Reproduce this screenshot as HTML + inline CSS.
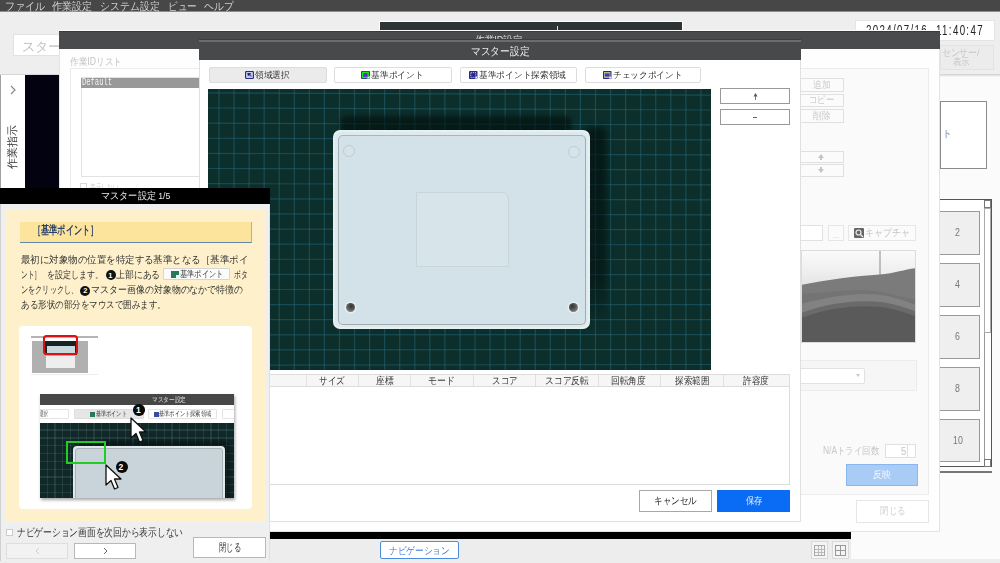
<!DOCTYPE html>
<html><head><meta charset="utf-8">
<style>
html,body{margin:0;padding:0;width:1000px;height:563px;overflow:hidden;background:#fcfbfb;font-family:"Liberation Sans",sans-serif;}
.a{position:absolute;box-sizing:border-box;}
.t{position:absolute;white-space:nowrap;line-height:1;transform-origin:0 50%;}
</style></head><body>
<div class="a" style="left:0px;top:0px;width:1000px;height:11px;background:#474747;"></div>
<div class="a" style="left:0px;top:11px;width:1000px;height:1px;background:#8c8c8c;"></div>
<div class="t" style="left:4.8px;top:0.95px;font-size:10.5px;color:#d2d2d2;--w:40.2;">ファイル</div>
<div class="t" style="left:51.6px;top:0.95px;font-size:10.5px;color:#d2d2d2;--w:40.2;">作業設定</div>
<div class="t" style="left:100.2px;top:0.95px;font-size:10.5px;color:#d2d2d2;--w:59.4;">システム設定</div>
<div class="t" style="left:168px;top:0.95px;font-size:10.5px;color:#d2d2d2;--w:28.8;">ビュー</div>
<div class="t" style="left:204px;top:0.95px;font-size:10.5px;color:#d2d2d2;--w:29.4;">ヘルプ</div>
<div class="a" style="left:0px;top:12px;width:1000px;height:62px;background:#eeeeee;"></div>
<div class="a" style="left:0px;top:74px;width:1000px;height:3px;background:linear-gradient(180deg,#cfcfcf,#e8e8e8 60%,rgba(250,250,250,0));"></div>
<div class="a" style="left:13px;top:34px;width:140px;height:22px;background:#fff;border:1px solid #e2e2e2;"></div>
<div class="t" style="left:22px;top:39.5px;font-size:13px;color:#c2c2c2;--w:53;">スタート</div>
<div class="a" style="left:855px;top:20px;width:140px;height:21px;background:#fff;border:1px solid #e4e4e4;"></div>
<div class="t" style="left:865.6px;top:23.35px;font-size:14.5px;color:#222;letter-spacing:2px;--w:117.9;">2024/07/16&nbsp;&nbsp;11:40:47</div>
<div class="a" style="left:940px;top:45px;width:54px;height:25px;background:#ececec;border:1px solid #e2e2e2;"></div>
<div class="t" style="left:942.4px;top:48.15px;font-size:9.5px;color:#c6c6c6;--w:37.6;">センサー/</div>
<div class="t" style="left:952.8px;top:57.25px;font-size:9.5px;color:#c6c6c6;--w:16.8;">表示</div>
<div class="a" style="left:0px;top:75px;width:25px;height:464px;background:#fff;border-left:1px solid #a0a0a0;"></div>
<svg class="a" style="left:9px;top:85px;" width="8" height="10"><path d="M2 1 L6 5 L2 9" stroke="#8a8a8a" stroke-width="1.2" fill="none"/></svg>
<div class="a" style="left:7px;top:168.5px;width:44px;height:11px;transform:rotate(-90deg);transform-origin:0 0;"><div class="t" style="left:0;top:0;font-size:10.5px;color:#333;--w:43.5;">作業指示</div></div>
<div class="a" style="left:25px;top:75px;width:826px;height:464px;background:#030210;"></div>
<div class="a" style="left:270px;top:532px;width:581px;height:7px;background:#000;"></div>
<div class="a" style="left:0px;top:539px;width:851px;height:24px;background:#ededed;"></div>
<div class="a" style="left:851px;top:559px;width:149px;height:4px;background:#ededed;"></div>
<div class="a" style="left:380px;top:541px;width:79px;height:18px;background:#fff;border:1px solid #4a8ae0;border-radius:2px;"></div>
<div class="t" style="left:389px;top:545.75px;font-size:9.5px;color:#3d7bd0;--w:60.6;">ナビゲーション</div>
<div class="a" style="left:811px;top:541px;width:17px;height:18px;background:#f4f4f4;border:1px solid #dadada;"></div>
<div class="a" style="left:832px;top:541px;width:17px;height:18px;background:#f4f4f4;border:1px solid #dadada;"></div>
<div class="a" style="left:814px;top:545px;width:11px;height:11px;border:1px solid #aaa;background:linear-gradient(90deg,transparent 3px,#bbb 3px,#bbb 4px,transparent 4px,transparent 6px,#bbb 6px,#bbb 7px,transparent 7px),linear-gradient(180deg,transparent 3px,#bbb 3px,#bbb 4px,transparent 4px,transparent 6px,#bbb 6px,#bbb 7px,transparent 7px);"></div>
<div class="a" style="left:835px;top:545px;width:11px;height:11px;border:1px solid #999;background:linear-gradient(90deg,transparent 4px,#999 4px,#999 5px,transparent 5px),linear-gradient(180deg,transparent 4px,#999 4px,#999 5px,transparent 5px);"></div>
<div class="a" style="left:940px;top:101px;width:47px;height:68px;border:1px solid #8a8a8a;background:#fff;"></div>
<div class="t" style="left:942px;top:129px;font-size:10px;color:#999;">ト</div>
<div class="a" style="left:940px;top:199px;width:52px;height:268px;border:1px solid #555;border-left:none;background:#fff;"></div>
<div class="a" style="left:984px;top:200px;width:7px;height:266px;border-left:1px solid #999;background:#fff;"></div>
<div class="a" style="left:984px;top:200px;width:7px;height:8px;border:1px solid #777;background:#fff;"></div>
<div class="a" style="left:984px;top:208px;width:7px;height:125px;border:1px solid #aaa;background:#fff;"></div>
<div class="a" style="left:984px;top:459px;width:7px;height:8px;border:1px solid #777;background:#fff;"></div>
<div class="a" style="left:940px;top:210.5px;width:39.5px;height:44px;background:#efefef;border:1.5px solid #999;border-left:none;"></div>
<div class="t" style="left:955px;top:227px;font-size:11px;color:#777;transform:scaleX(0.8);">2</div>
<div class="a" style="left:940px;top:262.5px;width:39.5px;height:44.25px;background:#efefef;border:1.5px solid #999;border-left:none;"></div>
<div class="t" style="left:955px;top:279.125px;font-size:11px;color:#777;transform:scaleX(0.8);">4</div>
<div class="a" style="left:940px;top:315px;width:39.5px;height:43.5px;background:#efefef;border:1.5px solid #999;border-left:none;"></div>
<div class="t" style="left:955px;top:331.25px;font-size:11px;color:#777;transform:scaleX(0.8);">6</div>
<div class="a" style="left:940px;top:366.75px;width:39.5px;height:43.75px;background:#efefef;border:1.5px solid #999;border-left:none;"></div>
<div class="t" style="left:955px;top:383.125px;font-size:11px;color:#777;transform:scaleX(0.8);">8</div>
<div class="a" style="left:940px;top:419px;width:39.5px;height:43px;background:#efefef;border:1.5px solid #999;border-left:none;"></div>
<div class="t" style="left:953px;top:435px;font-size:11px;color:#777;transform:scaleX(0.8);">10</div>
<div class="a" style="left:940px;top:471px;width:52px;height:2px;background:#777;"></div>
<div class="a" style="left:379px;top:21px;width:304px;height:10px;background:#fff;"></div>
<div class="a" style="left:380px;top:22px;width:302px;height:8px;background:#2e3333;"></div>
<div class="a" style="left:557px;top:26px;width:1px;height:4px;background:#ddd;"></div>
<div class="a" style="left:59px;top:30px;width:881px;height:502px;background:#fefefe;border:1px solid #e4e4e4;"></div>
<div class="a" style="left:59px;top:29.5px;width:881px;height:1.5px;background:#fafafa;"></div>
<div class="a" style="left:59px;top:31px;width:881px;height:18px;background:#4a4b4d;border-top:1px solid #3a3a3a;"></div>
<div class="t" style="left:474.8px;top:34.75px;font-size:10.5px;color:#dddddd;--w:48;">作業ID設定</div>
<div class="t" style="left:70px;top:56.5px;font-size:10px;color:#c4c4c4;--w:52;">作業IDリスト</div>
<div class="a" style="left:70px;top:68px;width:200px;height:130px;border:1px solid #ececec;background:#fff;"></div>
<div class="a" style="left:80.5px;top:77px;width:150px;height:100px;border:1px solid #e2e2e2;background:#fff;"></div>
<div class="a" style="left:81px;top:78px;width:150px;height:9.5px;background:#999;"></div>
<div class="a" style="left:80px;top:183px;width:7px;height:7px;border:1px solid #d8d8d8;background:#fff;"></div>
<div class="t" style="left:89.5px;top:182.5px;font-size:10px;color:#d0d0d0;--w:28.5;">表示しない</div>
<div class="t" style="left:82px;top:77.8px;font-size:10px;color:#f4f4f4;font-family:'Liberation Mono',monospace;--w:30;">Default</div>
<div class="a" style="left:790px;top:68px;width:138.5px;height:426.5px;background:#fafafa;border:1px solid #ececec;"></div>
<div class="a" style="left:790px;top:78px;width:53.5px;height:13.5px;background:#fbfbfb;border:1px solid #e0e0e0;"></div>
<div class="t" style="left:812.7px;top:79.75px;font-size:10px;color:#c8c8c8;--w:17.1;">追加</div>
<div class="a" style="left:790px;top:93.5px;width:53.5px;height:13px;background:#fbfbfb;border:1px solid #e0e0e0;"></div>
<div class="t" style="left:809.2px;top:95px;font-size:10px;color:#c8c8c8;--w:25.1;">コピー</div>
<div class="a" style="left:790px;top:109px;width:53.5px;height:13.5px;background:#fbfbfb;border:1px solid #e0e0e0;"></div>
<div class="t" style="left:812.7px;top:110.75px;font-size:10px;color:#c8c8c8;--w:17.3;">削除</div>
<div class="a" style="left:790px;top:151px;width:53.5px;height:11.5px;background:#fbfbfb;border:1px solid #e0e0e0;"></div>
<svg class="a" style="left:818px;top:153.75px;" width="6" height="6"><path d="M0 4 L3 0 L6 4 Z M2 4 H4 V6 H2Z" fill="#c4c4c4"/></svg>
<div class="a" style="left:790px;top:164px;width:53.5px;height:12.5px;background:#fbfbfb;border:1px solid #e0e0e0;"></div>
<svg class="a" style="left:818px;top:167.25px;" width="6" height="6"><path d="M0 2 L3 6 L6 2 Z M2 0 H4 V2 H2Z" fill="#c4c4c4"/></svg>
<div class="a" style="left:790px;top:225px;width:32.5px;height:16px;background:#fff;border:1px solid #e2e2e2;"></div>
<div class="a" style="left:828px;top:225px;width:16px;height:16px;background:#fbfbfb;border:1px solid #e6e6e6;"></div>
<div class="t" style="left:833px;top:232px;font-size:8px;color:#ccc;">...</div>
<div class="a" style="left:848px;top:225px;width:68px;height:16px;background:#fbfbfb;border:1px solid #e6e6e6;"></div>
<div class="a" style="left:854px;top:228px;width:9.5px;height:10px;background:#666;border-radius:1px;"></div>
<svg class="a" style="left:854px;top:228px;" width="10" height="10"><circle cx="4.5" cy="4.5" r="2.5" stroke="#eee" stroke-width="1.2" fill="none"/><path d="M6.5 6.5 L9 9" stroke="#eee" stroke-width="1.3"/></svg>
<div class="t" style="left:865px;top:228px;font-size:10px;color:#c4c4c4;--w:45;">キャプチャ</div>
<div class="a" style="left:801px;top:249.5px;width:115px;height:93.5px;overflow:hidden;background:linear-gradient(180deg,#fafafa 0%,#f0f0f0 20%,#e6e6e6 35%);border:1px solid #dcdcdc;">
<svg width="115" height="93" style="position:absolute;left:-1px;top:-1px">
<path d="M0 35 C25 30 55 26 78.5 24.5 C95 23 105 19 116 18 L116 94 L0 94 Z" fill="#7b7b7b"/>
<path d="M0 44 C30 42 60 38 80 42 C95 45 105 48 116 50 L116 94 L0 94 Z" fill="#747474"/>
<path d="M0 54 C30 46 58 42 80 45 C95 47 105 52 116 55 L116 94 L0 94 Z" fill="#828282"/>
<path d="M0 63 C30 52 58 50 80 52 C95 54 105 58 116 62 L116 94 L0 94 Z" fill="#6a6a6a"/>
<path d="M0 68 C30 57 58 55 80 57 C95 59 105 63 116 67 L116 94 L0 94 Z" fill="#5a5a5a"/>
<path d="M79 1 V25" stroke="#8a8a8a" stroke-width="1"/>
</svg></div>
<div class="a" style="left:790px;top:360px;width:127px;height:31px;background:#f6f6f6;border:1px solid #ececec;"></div>
<div class="a" style="left:790px;top:367.5px;width:74.5px;height:16.5px;background:#fff;border:1px solid #e2e2e2;border-radius:2px;"></div>
<svg class="a" style="left:856px;top:374px;" width="5" height="4"><path d="M0 0 L4 0 L2 3Z" fill="#c8c8c8"/></svg>
<div class="t" style="left:823px;top:446px;font-size:10px;color:#c8c8c8;--w:56.4;">N/Aトライ回数</div>
<div class="a" style="left:884.7px;top:443.6px;width:31px;height:14.7px;background:#fff;border:1px solid #e0e0e0;"></div>
<div class="a" style="left:907px;top:443.6px;width:8.8px;height:14.7px;border-left:1px solid #e0e0e0;"></div>
<div class="t" style="left:901px;top:445.5px;font-size:11px;color:#c4c4c4;transform:scaleX(0.85);">5</div>
<div class="a" style="left:846px;top:463.6px;width:72.4px;height:22.2px;background:#a9ccf7;border:1px solid #8ab6f2;"></div>
<div class="t" style="left:873px;top:470.2px;font-size:10px;color:#f2f7ff;--w:18;">反映</div>
<div class="a" style="left:856.3px;top:500.4px;width:72.3px;height:22.2px;background:#fff;border:1px solid #e6e6e6;"></div>
<div class="t" style="left:880px;top:506.4px;font-size:10px;color:#cfcfcf;--w:25.5;">閉じる</div>
<div class="a" style="left:199px;top:40px;width:602px;height:482px;background:#fff;border:1px solid #e0e0e0;"></div>
<div class="a" style="left:199px;top:39px;width:602px;height:1px;background:#3c3c3c;"></div>
<div class="a" style="left:199px;top:40px;width:602px;height:20px;background:#48494b;border-top:2px solid #6c6c6c;"></div>
<div class="t" style="left:470.6px;top:45.55px;font-size:10.5px;color:#f0f0f0;--w:58.2;">マスター設定</div>
<div class="a" style="left:209px;top:67.2px;width:117.5px;height:16px;background:#ebebeb;border:1px solid #dcdcdc;border-radius:2px;"></div>
<svg class="a" style="left:245.2px;top:71px;" width="9" height="8" viewBox="0 0 9 8"><rect x="0.5" y="0.5" width="8" height="7" rx="1.2" fill="#c9cbf2" stroke="#2c2c84" stroke-width="1.2"/><path d="M2.3 2 L6.3 2.2 L5.2 3.2 L7 5.5 L5.8 6.3 L4.2 4.1 L3 5.2 Z" fill="#1e1e70"/><path d="M5.2 4.5 L6.3 6" stroke="#fff" stroke-width="0.8"/></svg>
<div class="t" style="left:255px;top:71px;font-size:9px;color:#333;--w:34.5;">領域選択</div>
<div class="a" style="left:334px;top:67.2px;width:117.6px;height:16px;background:#fff;border:1px solid #dcdcdc;border-radius:2px;"></div>
<svg class="a" style="left:361px;top:71px;" width="9" height="8" viewBox="0 0 9 8"><rect x="0" y="0" width="9" height="8" rx="0.8" fill="#3a2a9a"/><rect x="1.6" y="1.5" width="5.6" height="5" fill="#5030c8" stroke="#1ee01e" stroke-width="1.4"/><path d="M5.8 7.6 L8.6 4.8 L8.6 7.6 Z" fill="#fff"/></svg>
<div class="t" style="left:371.1px;top:71px;font-size:9px;color:#333;--w:52.5;">基準ポイント</div>
<div class="a" style="left:459.5px;top:67.2px;width:117.2px;height:16px;background:#fff;border:1px solid #dcdcdc;border-radius:2px;"></div>
<svg class="a" style="left:469px;top:71px;" width="9" height="8" viewBox="0 0 9 8"><rect x="0" y="0" width="8.5" height="8" rx="0.8" fill="#2a2a8c"/><rect x="1.8" y="1.6" width="5" height="4.8" fill="none" stroke="#e8e8ff" stroke-width="0.9" stroke-dasharray="1 1"/><path d="M5.6 7.6 L8.2 5 L8.2 7.6 Z" fill="#fff"/></svg>
<div class="t" style="left:479px;top:71px;font-size:9px;color:#333;--w:87;">基準ポイント探索領域</div>
<div class="a" style="left:585px;top:67.2px;width:116px;height:16px;background:#fff;border:1px solid #dcdcdc;border-radius:2px;"></div>
<svg class="a" style="left:603px;top:71px;" width="9" height="8" viewBox="0 0 9 8"><rect x="0" y="0" width="8.5" height="8" rx="0.8" fill="#2a2a80"/><rect x="1.5" y="1.5" width="5.5" height="5" fill="#4a34c0" stroke="#b8bcd8" stroke-width="0.8"/><rect x="1.5" y="1.4" width="5.5" height="1" fill="#b5d030"/><rect x="1.5" y="5.6" width="5.5" height="1" fill="#b5d030"/><path d="M5.6 7.6 L8.2 5 L8.2 7.6 Z" fill="#fff"/></svg>
<div class="t" style="left:613px;top:71px;font-size:9px;color:#333;--w:69.2;">チェックポイント</div>
<div class="a" style="left:720px;top:88.3px;width:69.7px;height:15.6px;background:#fff;border:1px solid #999;"></div>
<svg class="a" style="left:751.5px;top:92px;" width="7" height="9"><path d="M3.5 1 L5.5 4.5 L1.5 4.5Z" fill="#555"/><path d="M3.5 4 V8" stroke="#777" stroke-width="1"/></svg>
<div class="a" style="left:720px;top:109.3px;width:69.7px;height:15.3px;background:#fff;border:1px solid #999;"></div>
<div class="a" style="left:752.5px;top:116.5px;width:4.5px;height:1.2px;background:#666;"></div>
<div class="a" style="left:208px;top:89px;width:503px;height:281px;background:#0c2f2c;overflow:hidden;"><svg class="a" style="left:0;top:0" width="503" height="281"><g stroke="rgba(42,110,135,0.45)" stroke-width="1.2"><line x1="-4.06" y1="0" x2="-4.06" y2="281"/><line x1="11.00" y1="0" x2="11.00" y2="281"/><line x1="26.06" y1="0" x2="26.06" y2="281"/><line x1="41.12" y1="0" x2="41.12" y2="281"/><line x1="56.18" y1="0" x2="56.18" y2="281"/><line x1="71.24" y1="0" x2="71.24" y2="281"/><line x1="86.30" y1="0" x2="86.30" y2="281"/><line x1="101.36" y1="0" x2="101.36" y2="281"/><line x1="116.42" y1="0" x2="116.42" y2="281"/><line x1="131.48" y1="0" x2="131.48" y2="281"/><line x1="146.54" y1="0" x2="146.54" y2="281"/><line x1="161.60" y1="0" x2="161.60" y2="281"/><line x1="176.66" y1="0" x2="176.66" y2="281"/><line x1="191.72" y1="0" x2="191.72" y2="281"/><line x1="206.78" y1="0" x2="206.78" y2="281"/><line x1="221.84" y1="0" x2="221.84" y2="281"/><line x1="236.90" y1="0" x2="236.90" y2="281"/><line x1="251.96" y1="0" x2="251.96" y2="281"/><line x1="267.02" y1="0" x2="267.02" y2="281"/><line x1="282.08" y1="0" x2="282.08" y2="281"/><line x1="297.14" y1="0" x2="297.14" y2="281"/><line x1="312.20" y1="0" x2="312.20" y2="281"/><line x1="327.26" y1="0" x2="327.26" y2="281"/><line x1="342.32" y1="0" x2="342.32" y2="281"/><line x1="357.38" y1="0" x2="357.38" y2="281"/><line x1="372.44" y1="0" x2="372.44" y2="281"/><line x1="387.50" y1="0" x2="387.50" y2="281"/><line x1="402.56" y1="0" x2="402.56" y2="281"/><line x1="417.62" y1="0" x2="417.62" y2="281"/><line x1="432.68" y1="0" x2="432.68" y2="281"/><line x1="447.74" y1="0" x2="447.74" y2="281"/><line x1="462.80" y1="0" x2="462.80" y2="281"/><line x1="477.86" y1="0" x2="477.86" y2="281"/><line x1="492.92" y1="0" x2="492.92" y2="281"/><line x1="507.98" y1="0" x2="507.98" y2="281"/><line x1="523.04" y1="0" x2="523.04" y2="281"/><line x1="0" y1="-11.23" x2="503" y2="-8.94"/><line x1="0" y1="3.89" x2="503" y2="6.03"/><line x1="0" y1="19.02" x2="503" y2="21.00"/><line x1="0" y1="34.14" x2="503" y2="35.97"/><line x1="0" y1="49.26" x2="503" y2="50.94"/><line x1="0" y1="64.38" x2="503" y2="65.91"/><line x1="0" y1="79.50" x2="503" y2="80.89"/><line x1="0" y1="94.62" x2="503" y2="95.86"/><line x1="0" y1="109.75" x2="503" y2="110.83"/><line x1="0" y1="124.87" x2="503" y2="125.80"/><line x1="0" y1="139.99" x2="503" y2="140.77"/><line x1="0" y1="155.11" x2="503" y2="155.74"/><line x1="0" y1="170.23" x2="503" y2="170.71"/><line x1="0" y1="185.35" x2="503" y2="185.68"/><line x1="0" y1="200.47" x2="503" y2="200.65"/><line x1="0" y1="215.60" x2="503" y2="215.62"/><line x1="0" y1="230.72" x2="503" y2="230.59"/><line x1="0" y1="245.84" x2="503" y2="245.56"/><line x1="0" y1="260.96" x2="503" y2="260.53"/><line x1="0" y1="276.08" x2="503" y2="275.50"/><line x1="0" y1="291.20" x2="503" y2="290.48"/></g></svg>
  <div class="a" style="left:132px;top:27px;width:232px;height:18px;border-radius:7px;background:rgba(2,14,12,0.62);filter:blur(2px);"></div>
  <div class="a" style="left:377px;top:38px;width:22px;height:200px;border-radius:7px;background:linear-gradient(180deg,rgba(2,14,12,0.65) 0%,rgba(2,14,12,0.55) 75%,rgba(2,14,12,0) 100%);filter:blur(3px);"></div>
  <div class="a" style="left:125px;top:41px;width:257px;height:199px;border-radius:7px;background:#e6eff1;"></div>
  <div class="a" style="left:127px;top:43px;width:253px;height:195px;border-radius:6px;background:#dde9ed;"></div>
  <div class="a" style="left:129.5px;top:45.5px;width:248px;height:190px;border-radius:5px;background:#d3e2e8;border:1.5px solid #9fadb0;border-top-color:#a9b7ba;border-left-color:#a3b1b4;"></div>
  <div class="a" style="left:208px;top:103px;width:93px;height:75px;border:1px solid #c6d6db;border-radius:0 7px 0 0;background:#d7e5ea;"></div>
  <div class="a" style="left:135px;top:56px;width:12px;height:12px;border-radius:50%;border:1px solid #bfcdd2;background:#d6e4e9;"></div>
  <div class="a" style="left:359.5px;top:56.5px;width:12px;height:12px;border-radius:50%;border:1px solid #bfcdd2;background:#d6e4e9;"></div>
  <div class="a" style="left:137.5px;top:214px;width:9px;height:9px;border-radius:50%;background:radial-gradient(circle at 60% 35%, #333 0, #555 40%, #888 75%, #aaa 100%);box-shadow:0 0 0 1.5px #e6eef0;"></div>
  <div class="a" style="left:361px;top:213.5px;width:9px;height:9px;border-radius:50%;background:radial-gradient(circle at 35% 35%, #333 0, #555 40%, #888 75%, #aaa 100%);box-shadow:0 0 0 1.5px #e6eef0;"></div>
</div>
<div class="a" style="left:208px;top:374px;width:582px;height:110.5px;background:#fff;border:1px solid #dcdcdc;"></div>
<div class="a" style="left:208px;top:374px;width:582px;height:12.5px;background:#f6f6f6;border:1px solid #dcdcdc;"></div>
<div class="a" style="left:305.6px;top:375px;width:1px;height:11px;background:#e0e0e0;"></div>
<div class="a" style="left:358px;top:375px;width:1px;height:11px;background:#e0e0e0;"></div>
<div class="a" style="left:410.4px;top:375px;width:1px;height:11px;background:#e0e0e0;"></div>
<div class="a" style="left:472.8px;top:375px;width:1px;height:11px;background:#e0e0e0;"></div>
<div class="a" style="left:535.2px;top:375px;width:1px;height:11px;background:#e0e0e0;"></div>
<div class="a" style="left:598px;top:375px;width:1px;height:11px;background:#e0e0e0;"></div>
<div class="a" style="left:660.4px;top:375px;width:1px;height:11px;background:#e0e0e0;"></div>
<div class="a" style="left:722.8px;top:375px;width:1px;height:11px;background:#e0e0e0;"></div>
<div class="t" style="left:319.2px;top:376.45px;font-size:9.5px;color:#333;--w:25.6;">サイズ</div>
<div class="t" style="left:375.5px;top:376.45px;font-size:9.5px;color:#333;--w:17.5;">座標</div>
<div class="t" style="left:428px;top:376.45px;font-size:9.5px;color:#333;--w:26.6;">モード</div>
<div class="t" style="left:491.5px;top:376.45px;font-size:9.5px;color:#333;--w:25.5;">スコア</div>
<div class="t" style="left:544.6px;top:376.45px;font-size:9.5px;color:#333;--w:43.9;">スコア反転</div>
<div class="t" style="left:611px;top:376.45px;font-size:9.5px;color:#333;--w:34.7;">回転角度</div>
<div class="t" style="left:674.9px;top:376.45px;font-size:9.5px;color:#333;--w:34;">探索範囲</div>
<div class="t" style="left:743.4px;top:376.45px;font-size:9.5px;color:#333;--w:25.9;">許容度</div>
<div class="a" style="left:639px;top:489.6px;width:73px;height:22.2px;background:#fff;border:1px solid #a8a8a8;"></div>
<div class="t" style="left:654.2px;top:496px;font-size:10px;color:#222;--w:42.8;">キャンセル</div>
<div class="a" style="left:717.3px;top:489.6px;width:72.5px;height:22.2px;background:#0a6cf5;"></div>
<div class="t" style="left:745.5px;top:496px;font-size:10px;color:#e4eeff;--w:16.7;">保存</div>
<div class="a" style="left:0px;top:188px;width:270px;height:373px;background:#efefef;border-left:1px solid #d0d0d0;border-right:1px solid #e0e0e0;"></div>
<div class="a" style="left:0px;top:188px;width:270px;height:15.5px;background:#000;"></div>
<div class="t" style="left:100.5px;top:191.25px;font-size:9.5px;color:#e8e8e8;--w:69.5;">マスター設定&nbsp;1/5</div>
<div class="a" style="left:5px;top:208.5px;width:261px;height:313.5px;background:#fdf0cb;"></div>
<div class="a" style="left:20px;top:221.5px;width:232px;height:21.2px;background:#fde49c;border-right:1px solid #b9b08a;border-bottom:1.5px solid #5f86a8;"></div>
<div class="t" style="left:32.7px;top:225.25px;font-size:11.5px;color:#2a3f66;font-weight:bold;--w:65.3;">［基準ポイント］</div>
<div class="t" style="left:21px;top:254.75px;font-size:9.5px;color:#333;--w:227;">最初に対象物の位置を特定する基準となる［基準ポイ</div>
<div class="t" style="left:21px;top:269.85px;font-size:9.5px;color:#333;--w:19.8;">ント］</div>
<div class="t" style="left:46.8px;top:269.85px;font-size:9.5px;color:#333;--w:56.4;">を設定します。</div>
<div class="a" style="left:105.5px;top:270.3px;width:10px;height:10px;border-radius:50%;background:#111;"></div>
<div class="t" style="left:108.3px;top:271.55px;font-size:7.5px;color:#fff;font-weight:bold;">1</div>
<div class="t" style="left:116.4px;top:269.85px;font-size:9.5px;color:#333;--w:44.2;">上部にある</div>
<div class="a" style="left:163px;top:268px;width:67.2px;height:12.2px;background:#fbfbfb;border:1px solid #d6d6d6;border-radius:1px;"></div>
<div class="a" style="left:170.8px;top:271px;width:7.8px;height:7px;background:#2a7a5a;"></div>
<div class="a" style="left:175.5px;top:274.5px;width:3px;height:3.5px;background:#dfe;"></div>
<div class="t" style="left:179.8px;top:270.35px;font-size:8.5px;color:#333;--w:43.2;">基準ポイント</div>
<div class="t" style="left:234.4px;top:269.85px;font-size:9.5px;color:#333;--w:13.6;">ボタ</div>
<div class="t" style="left:21px;top:285.45px;font-size:9.5px;color:#333;--w:57;">ンをクリックし、</div>
<div class="a" style="left:80.4px;top:285.8px;width:10px;height:10px;border-radius:50%;background:#111;"></div>
<div class="t" style="left:83.2px;top:287.05px;font-size:7.5px;color:#fff;font-weight:bold;">2</div>
<div class="t" style="left:91.2px;top:285.45px;font-size:9.5px;color:#333;--w:152.2;">マスター画像の対象物のなかで特徴の</div>
<div class="t" style="left:21px;top:299.75px;font-size:9.5px;color:#333;--w:145;">ある形状の部分をマウスで囲みます。</div>
<div class="a" style="left:19px;top:326.4px;width:232.5px;height:182.6px;background:#fff;border-radius:4px;"></div>
<div class="a" style="left:30.8px;top:336px;width:67px;height:1.8px;background:#b4b4b4;"></div>
<div class="a" style="left:44px;top:338px;width:33px;height:3px;background:#fff;"></div>
<div class="a" style="left:32.1px;top:341.1px;width:56.4px;height:31.5px;background:#b0b0b0;"></div>
<div class="a" style="left:45px;top:341.1px;width:32px;height:14px;background:#142424;"></div>
<div class="a" style="left:46.5px;top:346px;width:28.5px;height:8.5px;background:#c9d8dc;"></div>
<div class="a" style="left:46px;top:355.5px;width:29.2px;height:12.7px;background:#eeeeee;"></div>
<div class="a" style="left:43.2px;top:334.9px;width:35.1px;height:20.4px;border:2px solid #dd1111;border-radius:3.5px;"></div>
<div class="a" style="left:31px;top:374px;width:67px;height:1px;background:#ececec;"></div>
<div class="a" style="left:40px;top:394px;width:194px;height:103.5px;overflow:hidden;background:#fff;box-shadow:1px 2px 3px rgba(0,0,0,0.35);">
 <div class="a" style="left:0;top:0;width:194px;height:11px;background:#474747;"></div>
 <div class="a" style="left:0;top:28.5px;width:194px;height:75px;background-color:#112828;background-image:repeating-linear-gradient(90deg,transparent 0,transparent 6.5px,rgba(80,115,120,0.28) 6.5px,rgba(80,115,120,0.28) 7.8px),repeating-linear-gradient(180deg,transparent 0,transparent 6.5px,rgba(80,115,120,0.28) 6.5px,rgba(80,115,120,0.28) 7.8px);"></div>
 <div class="a" style="left:-10px;top:15px;width:39px;height:10px;background:#fff;border:1px solid #e4e4e4;border-radius:1px;"></div>
 <div class="a" style="left:34px;top:15px;width:70px;height:10px;background:#e6e6e6;border:1px solid #ddd;border-radius:1px;"></div>
 <div class="a" style="left:108px;top:15px;width:69px;height:10px;background:#fff;border:1px solid #e4e4e4;border-radius:1px;"></div>
 <div class="a" style="left:182px;top:15px;width:30px;height:10px;background:#fff;border:1px solid #e4e4e4;border-radius:1px;"></div>
 <div class="a" style="left:32.5px;top:52px;width:152px;height:60px;border-radius:4px;background:#dfe8ea;box-shadow:4px -4px 6px rgba(0,0,0,0.55);"></div><div class="a" style="left:34.5px;top:54px;width:148px;height:56px;border-radius:3px;background:#c8d4d9;border:1px solid #a8b4b8;"></div>
</div>
<div class="t" style="left:152px;top:396px;font-size:7px;color:#e0e0e0;--w:34;">マスター設定</div>
<div class="t" style="left:40.4px;top:411.25px;font-size:6.5px;color:#333;--w:7.5;">選択</div>
<div class="t" style="left:95.8px;top:411.25px;font-size:6.5px;color:#333;--w:30.6;">基準ポイント</div>
<div class="a" style="left:90px;top:411.5px;width:4.5px;height:5.5px;background:#2a7a5a;"></div>
<div class="t" style="left:159.4px;top:411.25px;font-size:6.5px;color:#333;--w:52;">基準ポイント探索領域</div>
<div class="a" style="left:153.7px;top:411.5px;width:5px;height:5.5px;background:#3a4aa0;"></div>
<div class="a" style="left:66.3px;top:441.2px;width:39.7px;height:23px;border:2px solid #22cc22;"></div>
<div class="a" style="left:133px;top:404px;width:11.5px;height:11.5px;border-radius:50%;background:#0a0a0a;"></div>
<div class="t" style="left:136px;top:405.55px;font-size:8.5px;color:#fff;font-weight:bold;">1</div>
<div class="a" style="left:115.5px;top:461px;width:12px;height:12px;border-radius:50%;background:#0a0a0a;"></div>
<div class="t" style="left:118.5px;top:462.75px;font-size:8.5px;color:#fff;font-weight:bold;">2</div>
<svg class="a" style="left:129.5px;top:417px;" width="18" height="28" viewBox="0 0 18 28"><path d="M1 1 L1 21 L6 16.5 L9.5 25 L13 23.5 L9.5 15 L16 15 Z" fill="#fff" stroke="#111" stroke-width="1.3" stroke-linejoin="round"/></svg>
<svg class="a" style="left:105px;top:463.5px;" width="18" height="28" viewBox="0 0 18 28"><path d="M1 1 L1 21 L6 16.5 L9.5 25 L13 23.5 L9.5 15 L16 15 Z" fill="#fff" stroke="#111" stroke-width="1.3" stroke-linejoin="round"/></svg>
<div class="a" style="left:5.5px;top:529px;width:7.2px;height:7px;background:#fff;border:1px solid #ccc;"></div>
<div class="t" style="left:17px;top:526.75px;font-size:10.5px;color:#333;--w:166;">ナビゲーション画面を次回から表示しない</div>
<div class="a" style="left:6px;top:543px;width:62px;height:15.6px;background:#f2f2f2;border:1px solid #dedede;"></div>
<svg class="a" style="left:35px;top:547px;" width="5" height="8"><path d="M4 1 L1 4 L4 7" stroke="#ccc" stroke-width="1" fill="none"/></svg>
<div class="a" style="left:73.5px;top:543px;width:62.2px;height:15.6px;background:#fff;border:1px solid #b8b8b8;"></div>
<svg class="a" style="left:103px;top:547px;" width="5" height="8"><path d="M1 1 L4 4 L1 7" stroke="#666" stroke-width="1" fill="none"/></svg>
<div class="a" style="left:193.3px;top:536.5px;width:72.4px;height:21.7px;background:#fff;border:1px solid #b8b8b8;"></div>
<div class="t" style="left:218.5px;top:542.05px;font-size:10.5px;color:#333;--w:22;">閉じる</div>
<script>
(function(){var els=document.querySelectorAll('.t');for(var i=0;i<els.length;i++){var e=els[i];var w=parseFloat(e.style.getPropertyValue('--w'));if(!(w>0))continue;var r=e.offsetWidth;if(r>0){var base=e.style.transform||'';e.style.transform=base+' scaleX('+(w/r)+')';}}})();
</script>
</body></html>
